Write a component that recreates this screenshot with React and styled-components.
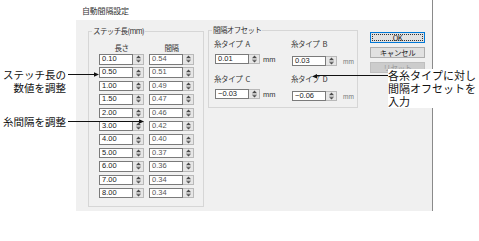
import React from 'react';
import styled, { createGlobalStyle } from 'styled-components';

const Global = createGlobalStyle`
  html, body { margin: 0; padding: 0; background: #fff; }
  body { font-family: "Noto Sans CJK JP", "Noto Sans", sans-serif; }
  * { box-sizing: border-box; }
`;

const Page = styled.div`
  position: relative;
  width: 479px;
  height: 241px;
  overflow: hidden;
  background: #fff;
`;

const Window = styled.div`
  margin-left: 76px;
  width: 357px;
  height: 211px;
  border-right: 1px solid #8a8a8a;
  display: flex;
  flex-direction: column;
`;

const TitleBar = styled.div`
  height: 20px;
  display: flex;
  align-items: center;
  padding-left: 6px;
  font-size: 8px;
  color: #333;
  letter-spacing: -0.2px;
`;

const Panel = styled.div`
  flex: 1;
  background: #f0f0f0;
  display: flex;
  align-items: flex-start;
  padding: 11px 0 0 12px;
`;

const Group = styled.div`
  position: relative;
  width: ${p => p.$w}px;
  height: ${p => p.$h}px;
  margin-left: ${p => p.$ml || 0}px;
  margin-top: ${p => p.$mt || 0}px;
  border: 1px solid #d6d6d6;
  padding: ${p => p.$pad};
`;

const Legend = styled.span`
  position: absolute;
  top: -6px;
  left: 3px;
  padding: 0 1px;
  background: #f0f0f0;
  font-size: 7.5px;
  line-height: 10px;
  color: #333;
  letter-spacing: -0.6px;
  white-space: nowrap;
`;

const HeaderRow = styled.div`
  display: grid;
  grid-template-columns: 45px 45px;
  column-gap: 5px;
  height: 11px;
  margin-bottom: 1px;
`;

const ColHead = styled.div`
  text-align: center;
  font-size: 7.5px;
  line-height: 11px;
  color: #333;
  letter-spacing: -0.4px;
`;

const ValueGrid = styled.div`
  display: grid;
  grid-template-columns: 45px 45px;
  column-gap: 5px;
  grid-auto-rows: 10.5px;
  row-gap: 2.9px;
`;

const Field = styled.div`
  display: flex;
  width: ${p => p.$w || 45}px;
  height: ${p => p.$h || 10.5}px;
`;

const TextBox = styled.div`
  flex: 1;
  background: #fff;
  border: 1px solid #7a7a7a;
  padding-left: 2px;
  font-family: "Liberation Sans", Arial, sans-serif;
  font-size: 7.5px;
  line-height: 8px;
  color: ${p => (p.$soft ? '#555' : '#222')};
  white-space: nowrap;
  overflow: hidden;
`;

const SpinBox = styled.div`
  width: 11px;
  background: #e6e6e6;
  border: 1px solid #b9b9b9;
  border-left: none;
  display: flex;
  align-items: center;
  justify-content: center;
`;

const Spin = () => (
  <SpinBox>
    <svg width="7" height="8" viewBox="0 0 7 8">
      <polygon points="3.5,0.6 1.2,2.9 5.8,2.9" fill="#4a4a4a" />
      <rect x="1" y="3.7" width="5" height="0.7" fill="#7a7a7a" />
      <polygon points="1.2,5.2 5.8,5.2 3.5,7.5" fill="#4a4a4a" />
    </svg>
  </SpinBox>
);

const SpinField = ({ value, soft, w, h }) => (
  <Field $w={w} $h={h}>
    <TextBox $soft={soft}>{value}</TextBox>
    <Spin />
  </Field>
);

const OffsetGrid = styled.div`
  display: grid;
  grid-template-columns: 77px 1fr;
  row-gap: 8px;
  align-items: start;
`;

const Cell = styled.div`
  display: flex;
  flex-direction: column;
  gap: ${p => (p.$drop ? 7 : 5)}px;
`;

const CellLabel = styled.div`
  height: 10px;
  display: flex;
  gap: 3px;
  font-size: 7.5px;
  line-height: 10px;
  color: #333;
  letter-spacing: -0.4px;
  white-space: nowrap;
`;

const InputRow = styled.div`
  display: flex;
  align-items: center;
  gap: ${p => (p.$faint ? 6 : 3)}px;
  margin-left: 1px;
`;

const Unit = styled.span`
  font-family: "Liberation Sans", Arial, sans-serif;
  font-size: ${p => (p.$faint ? 6.5 : 7.5)}px;
  color: ${p => (p.$faint ? '#777' : '#333')};
`;

const ButtonCol = styled.div`
  display: flex;
  flex-direction: column;
  gap: 4px;
  margin-left: 12px;
  margin-top: 1px;
`;

const Button = styled.div`
  width: 55px;
  height: 11px;
  display: flex;
  align-items: center;
  justify-content: center;
  font-size: 7.5px;
  letter-spacing: -0.4px;
  background: ${p => (p.$disabled ? '#cccccc' : '#e1e1e1')};
  border: 1px solid ${p => (p.$primary ? '#0078d7' : p.$disabled ? '#bfbfbf' : '#adadad')};
  color: ${p => (p.$disabled ? '#9a9a9a' : '#222')};
  outline: ${p => (p.$primary ? '1px dotted #333' : 'none')};
  outline-offset: -3px;
`;

const Note = styled.div`
  position: absolute;
  top: ${p => p.$top}px;
  left: ${p => p.$left}px;
  width: ${p => p.$width}px;
  text-align: ${p => p.$align || 'left'};
  font-size: ${p => p.$size}px;
  line-height: 13px;
  color: #111;
  white-space: nowrap;
  background: ${p => (p.$cover ? '#fff' : 'transparent')};
`;

const Arrows = styled.svg`
  position: absolute;
  left: 0;
  top: 0;
  pointer-events: none;
`;

const lengths = ['0.10', '0.50', '1.00', '1.50', '2.00', '3.00', '4.00', '5.00', '6.00', '7.00', '8.00'];
const gaps = ['0.54', '0.51', '0.49', '0.47', '0.46', '0.42', '0.40', '0.37', '0.36', '0.34', '0.34'];

const offsets = [
  { type: 'A', value: '0.01' },
  { type: 'B', value: '0.03', faint: true },
  { type: 'C', value: '−0.03' },
  { type: 'D', value: '−0.06', faint: true },
];

export default function App() {
  return (
    <Page>
      <Global />
      <Window>
        <TitleBar>自動間隔設定</TitleBar>
        <Panel>
          <Group $w={116} $h={176} $pad="10px 0 0 10px">
            <Legend>ステッチ長(mm)</Legend>
            <HeaderRow>
              <ColHead>長さ</ColHead>
              <ColHead>間隔</ColHead>
            </HeaderRow>
            <ValueGrid>
              {lengths.map((l, i) => (
                <React.Fragment key={i}>
                  <SpinField value={l} />
                  <SpinField value={gaps[i]} soft />
                </React.Fragment>
              ))}
            </ValueGrid>
          </Group>
          <Group $w={150} $h={78} $ml={4} $mt={-1} $pad="8px 0 0 5px">
            <Legend>間隔オフセット</Legend>
            <OffsetGrid>
              {offsets.map((o, i) => (
                <Cell key={i} $drop={o.faint}>
                  <CellLabel>
                    <span>糸タイプ</span>
                    <span>{o.type}</span>
                  </CellLabel>
                  <InputRow $faint={o.faint}>
                    <SpinField value={o.value} h={10} />
                    <Unit $faint={o.faint}>mm</Unit>
                  </InputRow>
                </Cell>
              ))}
            </OffsetGrid>
          </Group>
          <ButtonCol>
            <Button $primary>OK</Button>
            <Button>キャンセル</Button>
            <Button $disabled>リセット</Button>
          </ButtonCol>
        </Panel>
      </Window>

      <Note $top={67.5} $left={0} $width={66} $align="right" $size={10.5}>
        ステッチ長の<br />数値を調整
      </Note>
      <Note $top={115} $left={0} $width={66} $align="right" $size={10.5}>
        糸間隔を調整
      </Note>
      <Note $top={69} $left={388} $width={91} $size={11} $cover>
        各糸タイプに対し<br />間隔オフセットを<br />入力
      </Note>

      <Arrows width="479" height="241" viewBox="0 0 479 241">
        <line x1="68" y1="74.5" x2="95" y2="74.5" stroke="#111" strokeWidth="1" />
        <polygon points="99,74.5 94,72.3 94,76.7" fill="#111" />
        <line x1="68" y1="121.5" x2="140" y2="121.5" stroke="#111" strokeWidth="1" />
        <polygon points="144,121.5 139,119.3 139,123.7" fill="#111" />
        <line x1="388" y1="75.5" x2="316" y2="75.5" stroke="#111" strokeWidth="1" />
        <polygon points="312,76.5 317,74 317,78.5" fill="#111" />
      </Arrows>
    </Page>
  );
}
